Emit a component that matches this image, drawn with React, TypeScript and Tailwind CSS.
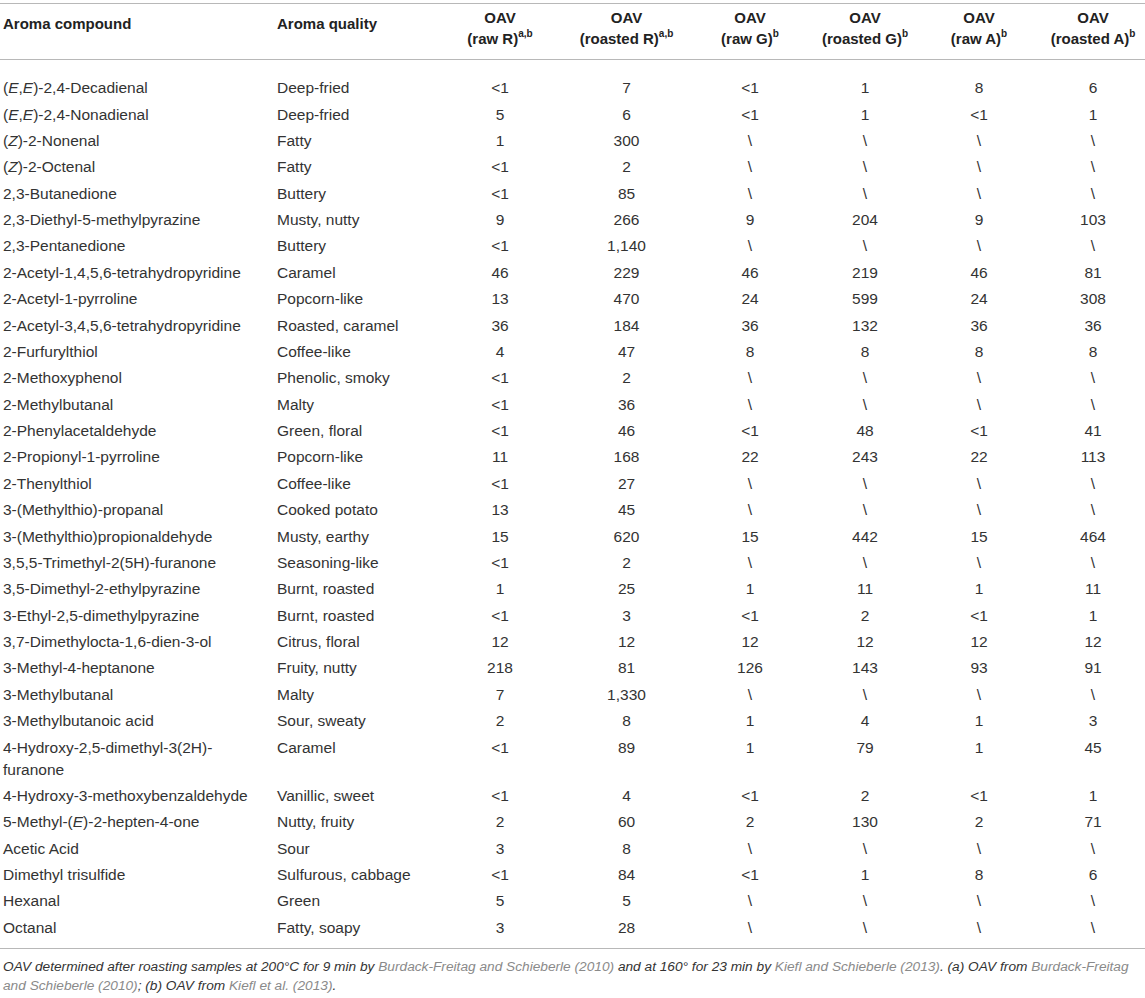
import React from "react";

type Row = [React.ReactNode, string, string, string, string, string, string, string];

const B = "\\";
const E = <i>E</i>;

const rows: Row[] = [
  [<>({E},{E})-2,4-Decadienal</>, "Deep-fried", "<1", "7", "<1", "1", "8", "6"],
  [<>({E},{E})-2,4-Nonadienal</>, "Deep-fried", "5", "6", "<1", "1", "<1", "1"],
  [<>(<i>Z</i>)-2-Nonenal</>, "Fatty", "1", "300", B, B, B, B],
  [<>(<i>Z</i>)-2-Octenal</>, "Fatty", "<1", "2", B, B, B, B],
  ["2,3-Butanedione", "Buttery", "<1", "85", B, B, B, B],
  ["2,3-Diethyl-5-methylpyrazine", "Musty, nutty", "9", "266", "9", "204", "9", "103"],
  ["2,3-Pentanedione", "Buttery", "<1", "1,140", B, B, B, B],
  ["2-Acetyl-1,4,5,6-tetrahydropyridine", "Caramel", "46", "229", "46", "219", "46", "81"],
  ["2-Acetyl-1-pyrroline", "Popcorn-like", "13", "470", "24", "599", "24", "308"],
  ["2-Acetyl-3,4,5,6-tetrahydropyridine", "Roasted, caramel", "36", "184", "36", "132", "36", "36"],
  ["2-Furfurylthiol", "Coffee-like", "4", "47", "8", "8", "8", "8"],
  ["2-Methoxyphenol", "Phenolic, smoky", "<1", "2", B, B, B, B],
  ["2-Methylbutanal", "Malty", "<1", "36", B, B, B, B],
  ["2-Phenylacetaldehyde", "Green, floral", "<1", "46", "<1", "48", "<1", "41"],
  ["2-Propionyl-1-pyrroline", "Popcorn-like", "11", "168", "22", "243", "22", "113"],
  ["2-Thenylthiol", "Coffee-like", "<1", "27", B, B, B, B],
  ["3-(Methylthio)-propanal", "Cooked potato", "13", "45", B, B, B, B],
  ["3-(Methylthio)propionaldehyde", "Musty, earthy", "15", "620", "15", "442", "15", "464"],
  ["3,5,5-Trimethyl-2(5H)-furanone", "Seasoning-like", "<1", "2", B, B, B, B],
  ["3,5-Dimethyl-2-ethylpyrazine", "Burnt, roasted", "1", "25", "1", "11", "1", "11"],
  ["3-Ethyl-2,5-dimethylpyrazine", "Burnt, roasted", "<1", "3", "<1", "2", "<1", "1"],
  ["3,7-Dimethylocta-1,6-dien-3-ol", "Citrus, floral", "12", "12", "12", "12", "12", "12"],
  ["3-Methyl-4-heptanone", "Fruity, nutty", "218", "81", "126", "143", "93", "91"],
  ["3-Methylbutanal", "Malty", "7", "1,330", B, B, B, B],
  ["3-Methylbutanoic acid", "Sour, sweaty", "2", "8", "1", "4", "1", "3"],
  [<>4-Hydroxy-2,5-dimethyl-3(2H)-<br />furanone</>, "Caramel", "<1", "89", "1", "79", "1", "45"],
  ["4-Hydroxy-3-methoxybenzaldehyde", "Vanillic, sweet", "<1", "4", "<1", "2", "<1", "1"],
  [<>5-Methyl-({E})-2-hepten-4-one</>, "Nutty, fruity", "2", "60", "2", "130", "2", "71"],
  ["Acetic Acid", "Sour", "3", "8", B, B, B, B],
  ["Dimethyl trisulfide", "Sulfurous, cabbage", "<1", "84", "<1", "1", "8", "6"],
  ["Hexanal", "Green", "5", "5", B, B, B, B],
  ["Octanal", "Fatty, soapy", "3", "28", B, B, B, B],
];

const headers: [string, string][] = [
  ["raw R", "a,b"],
  ["roasted R", "a,b"],
  ["raw G", "b"],
  ["roasted G", "b"],
  ["raw A", "b"],
  ["roasted A", "b"],
];

const grid = "grid grid-cols-[270px_167px_126px_127px_120px_110px_118px_107px]";
const lastPad = (i: number) => (i === 5 ? "pl-[3px]" : "");

export default function App() {
  return (
    <div
      className="w-[1145px] bg-white pt-[3px] text-[#333]"
      style={{ fontFamily: '"Liberation Sans", Arial, sans-serif' }}
    >
      <div className="border-t border-b border-[#b8b8b8]">
        {/* header */}
        <div className={`${grid} h-[56px] border-b border-[#b8b8b8] text-[15px] font-bold text-[#222]`}>
          <div className="pl-[3px] pt-[9px] leading-[21px]">Aroma compound</div>
          <div className="pl-[7px] pt-[9px] leading-[21px]">Aroma quality</div>
          {headers.map(([h, s], i) => (
            <div key={h} className={`pt-[3px] text-center leading-[21px] ${lastPad(i)}`}>
              <div>OAV</div>
              <div>
                ({h})<sup className="relative -top-[1px] align-super text-[10px] font-bold leading-none">{s}</sup>
              </div>
            </div>
          ))}
        </div>
        {/* body */}
        <div className="pt-[15px] pb-[7px] text-[15.5px]">
          {rows.map((r, ri) => (
            <div key={ri} className={`${grid} py-[2.2px] leading-[22px]`}>
              <div className="pl-[3px] whitespace-nowrap">{r[0]}</div>
              <div className="pl-[7px] whitespace-nowrap">{r[1]}</div>
              {r.slice(2).map((v, i) => (
                <div key={i} className={`text-center ${lastPad(i)}`}>
                  {v as string}
                </div>
              ))}
            </div>
          ))}
        </div>
      </div>
      <p className="pl-[3px] pt-[8px] text-[13.7px] italic leading-[19px] text-[#333] whitespace-nowrap">
        OAV determined after roasting samples at 200°C for 9 min by{" "}
        <span className="text-[#8a8a8a]">Burdack-Freitag and Schieberle (2010)</span> and at 160° for 23 min by{" "}
        <span className="text-[#8a8a8a]">Kiefl and Schieberle (2013)</span>. (a) OAV from{" "}
        <span className="text-[#8a8a8a]">Burdack-Freitag</span>
        <br />
        <span className="text-[#8a8a8a]">and Schieberle (2010)</span>; (b) OAV from{" "}
        <span className="text-[#8a8a8a]">Kiefl et al. (2013)</span>.
      </p>
    </div>
  );
}
